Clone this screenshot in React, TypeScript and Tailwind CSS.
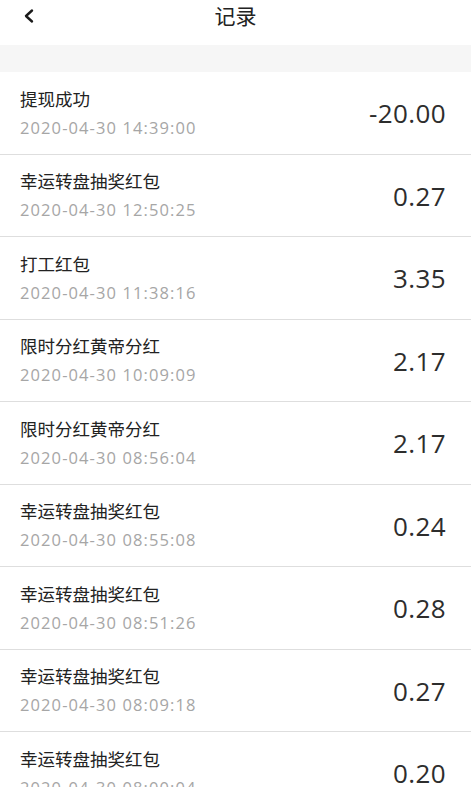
import React from "react";

type Record = {
  title: string;
  time: string;
  amount: string;
};

const records: Record[] = [
  { title: "提现成功", time: "2020-04-30 14:39:00", amount: "-20.00" },
  { title: "幸运转盘抽奖红包", time: "2020-04-30 12:50:25", amount: "0.27" },
  { title: "打工红包", time: "2020-04-30 11:38:16", amount: "3.35" },
  { title: "限时分红黄帝分红", time: "2020-04-30 10:09:09", amount: "2.17" },
  { title: "限时分红黄帝分红", time: "2020-04-30 08:56:04", amount: "2.17" },
  { title: "幸运转盘抽奖红包", time: "2020-04-30 08:55:08", amount: "0.24" },
  { title: "幸运转盘抽奖红包", time: "2020-04-30 08:51:26", amount: "0.28" },
  { title: "幸运转盘抽奖红包", time: "2020-04-30 08:09:18", amount: "0.27" },
  { title: "幸运转盘抽奖红包", time: "2020-04-30 08:00:04", amount: "0.20" },
];

const font = {
  fontFamily: "'Open Sans', 'Noto Sans CJK SC', sans-serif",
};

const RecordRow = ({ title, time, amount }: Record) => (
  <div className="h-[82.5px] shrink-0 border-b border-[#dedede] flex items-center justify-between pl-5 pr-[25px]">
    <div className="flex flex-col gap-[5px]">
      <span className="text-[17.5px] leading-[24px] text-[#222]">{title}</span>
      <span className="text-[16.5px] leading-[23px] tracking-[1.1px] text-[#a6a6a6]">
        {time}
      </span>
    </div>
    <span className="text-[26px] leading-none tracking-[0.4px] text-[#2d2d2d] mt-[1px]">
      {amount}
    </span>
  </div>
);

export default function App() {
  return (
    <div
      className="w-[471px] h-[787px] overflow-hidden bg-white flex flex-col"
      style={font}
    >
      {/* Header */}
      <div className="h-[45px] shrink-0 relative flex justify-center">
        <svg
          className="absolute left-[22px] top-[8px]"
          width="14"
          height="16"
          viewBox="0 0 14 16"
          fill="none"
          stroke="#1a1a1a"
          strokeWidth="2.4"
          strokeLinecap="round"
          strokeLinejoin="round"
        >
          <path d="M10 2.5 L4 8 L10 13.5" />
        </svg>
        <span className="text-[21px] leading-[30px] text-[#222] mt-[1px]">记录</span>
      </div>
      <div className="h-[27px] shrink-0 bg-[#f6f6f6]" />

      {/* List */}
      <div className="flex flex-col">
        {records.map((r, i) => (
          <RecordRow key={i} {...r} />
        ))}
      </div>
    </div>
  );
}
